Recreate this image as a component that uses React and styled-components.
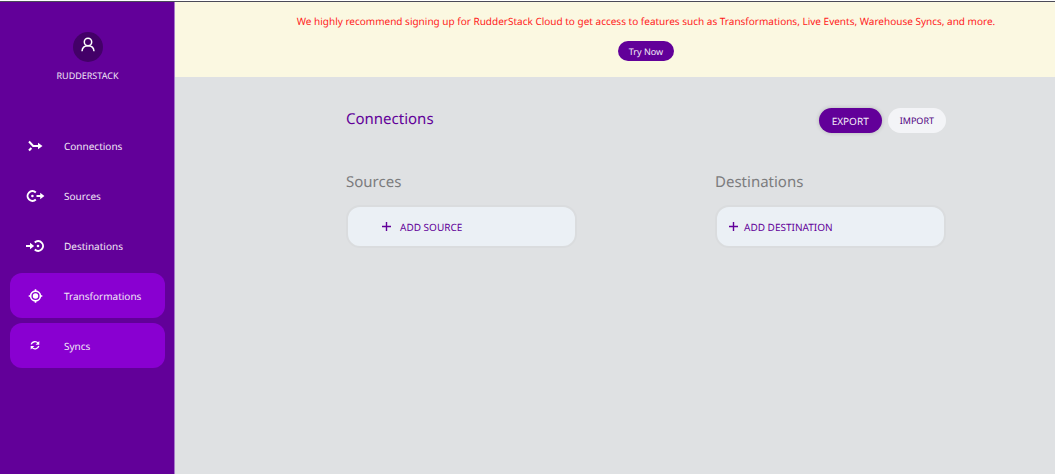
import React from "react";
import styled, { createGlobalStyle } from "styled-components";

const GlobalStyle = createGlobalStyle`
  * { box-sizing: border-box; }
  body {
    margin: 0;
    background: #dfe1e3;
    font-family: "Noto Sans", "Open Sans", sans-serif;
    font-size: 10px;
    line-height: 16px;
    text-rendering: geometricPrecision;
  }
  button { font-family: inherit; text-rendering: inherit; cursor: pointer; }
`;

const Page = styled.div`
  display: flex;
  min-height: 100vh;
  padding-top: 1px;
  background: #ffffff;
`;

const Frame = styled.div`
  display: flex;
  flex: 1;
  border-top: 1px solid #4b4b58;
  background: #dfe1e3;
`;

const Sidebar = styled.aside`
  flex: none;
  width: 175px;
  padding: 30px 9px 0 10px;
  border-right: 1px solid #a678c8;
  background: #620099;
  color: #f1e8f6;
`;

const Account = styled.div`
  display: flex;
  flex-direction: column;
  align-items: center;
  gap: 7px;
  margin-bottom: 40px;
  font-size: 9px;
  line-height: 14px;
`;

const Avatar = styled.div`
  display: flex;
  justify-content: center;
  width: 30px;
  height: 30px;
  padding-top: 5px;
  border-radius: 50%;
  background: #430068;
  color: #ffffff;
`;

const Nav = styled.nav`
  display: flex;
  flex-direction: column;
  gap: 5px;
`;

const NavLink = styled.a`
  display: flex;
  align-items: center;
  gap: 18px;
  height: 45px;
  padding-left: 14px;
  border-radius: 12px;
  background: ${(p) => (p.$filled ? "#8900d1" : "transparent")};
  color: inherit;
  text-decoration: none;
`;

const NavIcon = styled.svg`
  flex: none;
  width: 22px;
  height: 16px;
  fill: none;
  stroke: #ffffff;
  stroke-width: 2;
`;

const Main = styled.main`
  flex: 1;
  min-width: 0;
`;

const Banner = styled.section`
  display: flex;
  flex-direction: column;
  align-items: center;
  gap: 12px;
  padding: 11px 0 16px 62px;
  background: #fbf8e1;
  color: #ff1a1a;
  text-align: center;
`;

const BannerText = styled.p`
  margin: 0;
`;

const Pill = styled.button`
  height: ${(p) => (p.$small ? 20 : 25)}px;
  padding: 0 ${(p) => (p.$small ? 11 : p.$light ? 12 : 13)}px;
  border: 0;
  border-radius: 13px;
  background: ${(p) => (p.$light ? "#f3f4f7" : "#620099")};
  box-shadow: ${(p) => (p.$raised ? "0 0 4px rgba(0, 0, 0, 0.2)" : "none")};
  color: ${(p) => (p.$light ? "#4f0080" : "#f3eaf8")};
  font-size: ${(p) => p.$size}px;
`;

const Content = styled.div`
  padding: 31px 0 0 62px;
`;

const Inner = styled.div`
  max-width: 600px;
  margin: 0 auto;
`;

const TitleRow = styled.header`
  display: flex;
  align-items: flex-start;
  justify-content: space-between;
`;

const Title = styled.h1`
  margin: 0;
  color: #620099;
  font-size: 15px;
  font-weight: 400;
  line-height: 22px;
`;

const Actions = styled.div`
  display: flex;
  gap: 6px;
`;

const Columns = styled.div`
  display: flex;
  justify-content: space-between;
  margin-top: 38px;
`;

const Column = styled.section`
  width: 231px;
`;

const ColumnTitle = styled.h2`
  margin: 0 0 12px;
  color: #7c7c7e;
  font-size: 15px;
  font-weight: 400;
  line-height: 22px;
`;

const AddCard = styled.button`
  display: flex;
  align-items: center;
  gap: ${(p) => (p.$wide ? 8 : 5)}px;
  width: 100%;
  height: 43px;
  padding: 0 0 0 ${(p) => (p.$wide ? 33 : 11)}px;
  border: 2px solid #dadcde;
  border-radius: 14px;
  background: #ebf0f5;
  color: #620099;
  font-size: 10px;
`;

const PlusIcon = styled.svg`
  width: 11px;
  height: 11px;
  stroke: currentColor;
  stroke-width: 1.4;
`;

function Plus() {
  return (
    <PlusIcon viewBox="0 0 11 11" aria-hidden="true">
      <path d="M5.5 1v9M1 5.5h9" />
    </PlusIcon>
  );
}

const icons = {
  connections: (
    <>
      <path d="M5 3.5 L9.2 8 H15" />
      <path d="M5 12.5 L7.4 10" />
      <path d="M14 4.8 L18.5 8 L14 11.2Z" fill="#fff" stroke="none" />
    </>
  ),
  sources: (
    <>
      <path d="M11.8 4.4 A4.9 4.9 0 1 0 11.8 11.6" />
      <circle cx="8.4" cy="8" r="1.3" fill="#fff" stroke="none" />
      <path d="M12.5 8 H17" />
      <path d="M16.2 4.8 L20.4 8 L16.2 11.2Z" fill="#fff" stroke="none" />
    </>
  ),
  destinations: (
    <>
      <path d="M10.8 4.4 A4.9 4.9 0 1 1 10.8 11.6" />
      <circle cx="14" cy="8" r="1.3" fill="#fff" stroke="none" />
      <path d="M2 8 H7" />
      <path d="M6 4.8 L10.2 8 L6 11.2Z" fill="#fff" stroke="none" />
    </>
  ),
  transformations: (
    <>
      <circle cx="11.5" cy="8" r="4.9" strokeWidth="1.6" />
      <circle cx="11.5" cy="8" r="2.7" fill="#fff" stroke="none" />
      <path d="M11.5 1.2V3.2M11.5 12.8V14.8M4.7 8H6.7M16.3 8H18.3" strokeWidth="1.6" />
    </>
  ),
  syncs: (
    <>
      <path d="M7.2 6.4 A3.9 3.9 0 0 1 14 5.2 M14.8 8 A3.9 3.9 0 0 1 8 9.4" strokeWidth="1.3" />
      <path d="M15.3 2.9 V6.7 H11.6Z M6.7 11.6 V7.9 H10.4Z" fill="#fff" stroke="none" />
    </>
  ),
};

const navItems = [
  { id: "connections", label: "Connections" },
  { id: "sources", label: "Sources" },
  { id: "destinations", label: "Destinations" },
  { id: "transformations", label: "Transformations", filled: true },
  { id: "syncs", label: "Syncs", filled: true },
];

export default function App() {
  return (
    <Page>
      <GlobalStyle />
      <Frame>
        <Sidebar>
          <Account>
            <Avatar>
              <svg width="16" height="16" viewBox="0 0 16 16" fill="none" stroke="currentColor" strokeWidth="1.5" aria-hidden="true">
                <circle cx="8" cy="5" r="3.7" />
                <path d="M2 14.2 C2.2 10.9 4.3 8.7 8 8.7 S13.8 10.9 14 14.2" />
              </svg>
            </Avatar>
            RUDDERSTACK
          </Account>
          <Nav>
            {navItems.map((item) => (
              <NavLink key={item.id} href={"#" + item.id} $filled={item.filled}>
                <NavIcon viewBox="0 0 22 16" aria-hidden="true">{icons[item.id]}</NavIcon>
                {item.label}
              </NavLink>
            ))}
          </Nav>
        </Sidebar>
        <Main>
          <Banner>
            <BannerText>
              We highly recommend signing up for RudderStack Cloud to get access to features such as
              Transformations, Live Events, Warehouse Syncs, and more.
            </BannerText>
            <Pill $small $size={9}>Try Now</Pill>
          </Banner>
          <Content>
            <Inner>
              <TitleRow>
                <Title>Connections</Title>
                <Actions>
                  <Pill $raised $size={10}>EXPORT</Pill>
                  <Pill $light $size={9}>IMPORT</Pill>
                </Actions>
              </TitleRow>
              <Columns>
                <Column>
                  <ColumnTitle>Sources</ColumnTitle>
                  <AddCard $wide><Plus />ADD SOURCE</AddCard>
                </Column>
                <Column>
                  <ColumnTitle>Destinations</ColumnTitle>
                  <AddCard><Plus />ADD DESTINATION</AddCard>
                </Column>
              </Columns>
            </Inner>
          </Content>
        </Main>
      </Frame>
    </Page>
  );
}
